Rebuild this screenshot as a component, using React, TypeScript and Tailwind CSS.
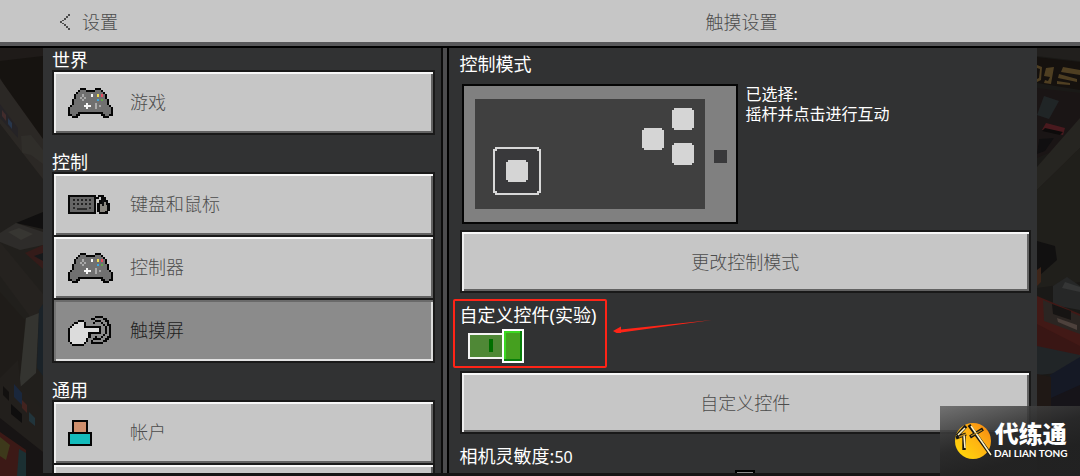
import React, { useState } from "react";

const PALETTE: Record<string, string> = {
  "#": "#050505",
  g: "#707070",
  l: "#a9a9a9",
  w: "#f7f7f7",
  y: "#f0dc50",
  r: "#e84a5f",
  b: "#3aa5dd",
  G: "#63a548",
  h: "#dcdcdc",
};

const CONTROLLER = [
  "......###....###......",
  ".....#ggg####ggg#.....",
  "....#gggggggggggg#....",
  "...#ggglgggwggygrg#...",
  "...#gglglggggggggg#...",
  "..#gggglggggggbgGgg#..",
  "..#gggggggggggggggg#..",
  "..#ggggggwggglggggg#..",
  ".#ggggggwwwgglglgggg#.",
  "#ggggggggwggglggggggg#",
  "#gggggggggggggggggggg#",
  "#gggg############gggg#",
  "##gg##..........##gg##",
  "..###............###..",
];

const HAND = [
  ".............####....",
  "...........##....##..",
  ".....###.....###..##.",
  "...##hhh#...#...#..#.",
  "..#hhhhh#........#.##",
  ".#hhhhhh########..#.#",
  "#hhhhhhhhhhhhhh#..#.#",
  "#hhhhhhhhhhhhhh#..#.#",
  "#hhhhhhhhh######..#.#",
  "#hhhhhhhhh#......#..#",
  "#hhhhhhhhh#..#..#..##",
  "#hhhhhhhh#..####..##.",
  "#hhhhhhhh#.#.....##..",
  ".#hhhhhh#..######....",
  "..######.............",
];

function PixelArt({ rows, cols, className }: { rows: string[]; cols: number; className: string }) {
  return (
    <svg
      viewBox={`0 0 ${cols} ${rows.length}`}
      preserveAspectRatio="none"
      shapeRendering="crispEdges"
      className={className}
      aria-hidden="true"
    >
      {rows.flatMap((row, y) =>
        row
          .slice(0, cols)
          .split("")
          .map((c, x) =>
            c === "." ? null : <rect key={`${x}-${y}`} x={x} y={y} width="1" height="1" fill={PALETTE[c]} />
          )
      )}
    </svg>
  );
}

const ControllerIcon = () => <PixelArt rows={CONTROLLER} cols={22} className="h-[30px] w-[45px]" />;
const HandIcon = () => <PixelArt rows={HAND} cols={21} className="h-[30px] w-[43px]" />;

function KeyboardIcon() {
  const keys: React.ReactNode[] = [];
  for (let y = 0; y < 2; y++)
    for (let x = 0; x < 5; x++)
      keys.push(<rect key={`${x}-${y}`} x={5 + x * 4} y={4 + y * 4} width="2" height="2" fill="#222" />);
  return (
    <svg viewBox="0 0 42 20" shapeRendering="crispEdges" className="h-5 w-[42px]" aria-hidden="true">
      <path d="M0 0h28v19H0z" fill="#080808" />
      <path d="M2 2h24v15H2z" fill="#666" />
      {keys}
      <path d="M5 12h2v2H5zM9 13h10v2H9zM21 12h2v2h-2z" fill="#2c2c2c" />
      <path d="M28 2h2V0h6v2h2v3h2v3h2v8h-2v3h-9v-2h-2V8h2V5h2V2h-2v2h-4z" fill="#080808" />
      <path d="M32 9h2v2h2V7h2v3h1v6h-2v1h-5z" fill="#8b8880" />
      <path d="M34 5h2v6h-2z" fill="#111" />
    </svg>
  );
}

function AccountIcon() {
  return (
    <svg viewBox="0 0 24 26" shapeRendering="crispEdges" className="h-[26px] w-6" aria-hidden="true">
      <path d="M4 0h16v14H4z" fill="#050505" />
      <path d="M6 2h12v11H6z" fill="#cf8f6d" />
      <path d="M0 12h24v14H0z" fill="#050505" />
      <path d="M2 14h20v10H2z" fill="#14bcbc" />
    </svg>
  );
}

const raised =
  "border-2 border-[#191919] bg-[#c6c6c6] text-[#4c4c4c] shadow-[inset_0_2px_#f8f8f8,inset_2px_0_#ededed,inset_-2px_-2px_#626262]";
const pressed =
  "border-2 border-[#191919] bg-[#8b8b8b] text-[#202020] shadow-[inset_0_2px_#6a6a6a,inset_2px_0_#747474,inset_0_-2px_#e2e2e2,inset_-2px_0_#dcdcdc]";

function NavItem({
  label,
  icon,
  active = false,
  onSelect,
}: {
  label: string;
  icon: React.ReactNode;
  active?: boolean;
  onSelect: () => void;
}) {
  return (
    <button
      type="button"
      onClick={onSelect}
      aria-pressed={active}
      className={`-mt-0.5 flex h-[65px] w-full shrink-0 items-center px-3.5 text-left text-[18px] leading-5 first:mt-0 ${
        active ? pressed : raised
      }`}
    >
      <span className="flex w-[62px] shrink-0 items-center">{icon}</span>
      <span className="pb-0.5">{label}</span>
    </button>
  );
}

function NavGroup({ title, children }: { title: string; children: React.ReactNode }) {
  return (
    <section>
      <h2 className="h-[22px] text-[18px] leading-6 font-normal text-white">{title}</h2>
      <div className="flex flex-col">{children}</div>
    </section>
  );
}

function ModePreview() {
  return (
    <svg
      viewBox="0 0 276 140"
      shapeRendering="crispEdges"
      className="h-[140px] w-[276px] shrink-0"
      role="img"
      aria-label="摇杆并点击进行互动"
    >
      <path d="M0 0h276v140H0z" fill="#050505" />
      <path d="M2 2h272v136H2z" fill="#808080" />
      <path d="M13 15h230v110H13z" fill="#404040" />
      <path d="M33 63h44v2h2v44h-2v2H33v-2h-2V65h2z" fill="#d8d8d8" />
      <path d="M35 65h40v2h2v40h-2v2H35v-2h-2V67h2z" fill="#39393b" />
      <g fill="#d5d5d5">
        <path d="M46 76h18v2h2v18h-2v2H46v-2h-2V78h2z" />
        <path d="M212 24h18v2h2v18h-2v2h-18v-2h-2V26h2z" />
        <path d="M182 44h18v2h2v18h-2v2h-18v-2h-2V46h2z" />
        <path d="M212 59h18v2h2v18h-2v2h-18v-2h-2V61h2z" />
      </g>
      <path d="M252 66h13v13h-13z" fill="#39393b" />
    </svg>
  );
}

function SceneLeft() {
  return (
    <svg viewBox="0 0 43 428" preserveAspectRatio="none" className="h-full w-[43px] shrink-0 opacity-85" aria-hidden="true">
      <path d="M0 0h43v428H0z" fill="#24221e" />
      <path d="M0 0h43v102L0 30z" fill="#171310" />
      <path d="M0 0h43v8L0 13z" fill="#211d1a" />
      <path d="M0 31l43 60v42L0 76z" fill="#302c28" />
      <path d="M0 56l18 24v10L0 70z" fill="#28262a" />
      <path d="M2 62l4 5v6l-4-5z" fill="#4a3131" />
      <path d="M8 70l4 5v6l-4-5z" fill="#2b3c55" />
      <path d="M21 88l10-1 12 15v14l-12-9-9-2z" fill="#35332f" />
      <path d="M0 76l43 55v35L0 185z" fill="#24221f" />
      <path d="M43 164v17l-27-6z" fill="#100f0f" />
      <path d="M0 185l16-10 27 9v13l-23 5-20-8z" fill="#33312e" />
      <path d="M8 184l11-4 14 6-12 6z" fill="#3e3c38" />
      <path d="M0 194l43 52v40L0 228z" fill="#282521" />
      <path d="M43 197v24l-18-16z" fill="#3a1d1a" />
      <path d="M43 205v8l-9-5z" fill="#17191c" />
      <path d="M0 244l25 28-5 60-20 14z" fill="#211e1a" />
      <path d="M26 270l13-5-3 60-17 15z" fill="#3a3a36" />
      <path d="M39 262l4-6v72l-6-8z" fill="#1b252c" />
      <path d="M0 330l18-18 3 28 22 22v66H0z" fill="#25211e" />
      <path d="M14 336l8 9v12l-8-8z" fill="#1c2b43" />
      <path d="M3 338l6 6v9l-6-6z" fill="#12100f" />
      <path d="M11 356l11 10v9l-11-9z" fill="#0e0d0d" />
      <path d="M22 352l5 5v8l-5-5z" fill="#4b2621" />
      <path d="M29 364l6 6v8l-6-5z" fill="#243a42" />
      <path d="M0 370l43 34v24H0z" fill="#181414" />
      <path d="M0 384l26 18v26H0z" fill="#431b17" />
      <path d="M0 389l10 8-4 15-6-4z" fill="#45401d" />
      <path d="M19 401l7 4v23h-9z" fill="#1d3438" />
    </svg>
  );
}

function SceneRight() {
  return (
    <svg viewBox="0 0 43 428" preserveAspectRatio="none" className="h-full w-[43px] shrink-0 opacity-85" aria-hidden="true">
      <path d="M0 0h43v428H0z" fill="#1c1b18" />
      <path d="M0 0h43v13L0 8z" fill="#24221f" />
      <path d="M0 9l43 5v28L0 35z" fill="#15110e" />
      <path d="M0 17l5 2-1 13-4 2v-3l2-1 1-9-3-1zM9 20l8-1-3 17-7-1 1-3 3 1 2-4-6-1zM26 19l17 3v5l-19-3zM22 26l18 5v3l-19-4zM20 33l13 2v2l-13-1z" fill="#5a4725" />
      <path d="M0 40l43 5v34L14 104 0 110z" fill="#1c1616" />
      <path d="M7 48l15 5-10 18-12-4z" fill="#23282a" />
      <path d="M9 75l19 5-2 7-21-5z" fill="#531b20" />
      <path d="M8 80l18 4-3 3-18-4z" fill="#0c0a0a" />
      <path d="M2 91l15-1-9 13-8 3z" fill="#100f10" />
      <path d="M0 119l43-49v30L0 142z" fill="#2a2824" />
      <path d="M0 142l43-42v134L0 240z" fill="#23211d" />
      <path d="M0 193l18 5 2 14-18 16-2-4z" fill="#111010" />
      <path d="M0 222l4-3v15l-4 4z" fill="#45281a" />
      <path d="M16 238l14-9 13 9v24l-27-5z" fill="#292b2b" />
      <path d="M28 234l15 5v5l-18-4z" fill="#3b3c3c" />
      <path d="M0 248l43 18v42L0 291z" fill="#4b1a17" />
      <path d="M6 252l37 16v18L7 273z" fill="#302925" />
      <path d="M15 256l19 7v9l-18-6z" fill="#171413" />
      <path d="M20 270l20 7v5l-19-8z" fill="#574943" />
      <path d="M0 276l43 22v8L14 322 0 310z" fill="#401714" />
      <path d="M0 298l43 9v16L0 327z" fill="#24282b" />
      <path d="M13 327l30-18v43H13z" fill="#151a29" />
      <path d="M0 326l14 3v99H0z" fill="#211916" />
      <path d="M14 350l29-13v91H14z" fill="#17141a" />
    </svg>
  );
}

function Watermark() {
  return (
    <div className="absolute right-0 bottom-0 flex h-[70px] w-[140px] items-center bg-[linear-gradient(165deg,rgba(90,90,90,0.78)_0%,rgba(42,42,42,0.92)_45%,rgba(34,34,34,0.97)_70%)] pl-3.5">
      <svg viewBox="0 0 40 40" className="h-10 w-10 shrink-0" aria-hidden="true">
        <defs>
          <linearGradient id="badge" x1="0" y1="1" x2="1" y2="0">
            <stop offset="0" stopColor="#ffdf0a" />
            <stop offset="0.55" stopColor="#ffb312" />
            <stop offset="1" stopColor="#f58212" />
          </linearGradient>
        </defs>
        <circle cx="19" cy="20" r="18" fill="url(#badge)" />
        <path d="M12 5L3 15M2 17l10-4M10 14v15M16 16L29 8M15 4l22 30" stroke="#141414" strokeWidth="3.4" fill="none" />
        <path d="M11 7L4 14M10 14l1 13M17 5l20 29" stroke="#fff3c4" strokeWidth="1.6" fill="none" />
        <path d="M5 16l7-3M17 15l11-6" stroke="#b48620" strokeWidth="1.4" fill="none" />
      </svg>
      <div className="flex flex-col items-center whitespace-nowrap text-white">
        <span className="text-[24px] leading-6 font-black">代练通</span>
        <span className="font-['Lato'] text-[10px] leading-[14px] font-bold">DAI LIAN TONG</span>
      </div>
    </div>
  );
}

export default function App() {
  const [page, setPage] = useState("touch");
  const [custom, setCustom] = useState(true);
  const [sensitivity, setSensitivity] = useState(50);

  return (
    <div className="relative flex h-screen flex-col overflow-hidden bg-[#151414] font-['Noto_Sans','Noto_Sans_CJK_SC',sans-serif] font-light">
      <header className="flex h-12 shrink-0 items-center border-b-2 border-black bg-[#c6c6c6] pb-0.5 text-[18px] text-[#4c4c4c] shadow-[inset_0_-4px_#58585a]">
        <div className="w-[41%] pl-[60px]">
          <button type="button" className="flex items-center gap-3 leading-5">
            <svg viewBox="0 0 10 16" shapeRendering="crispEdges" className="h-4 w-2.5" aria-hidden="true">
              <path
                d="M8 0h2v2H8zM6 2h2v2H6zM4 4h2v2H4zM2 6h2v1H2zM0 7h2v2H0zM2 9h2v1H2zM4 10h2v2H4zM6 12h2v2H6zM8 14h2v2H8z"
                fill="#4c4c4c"
              />
            </svg>
            设置
          </button>
        </div>
        <h1 className="flex-1 pr-10 text-center leading-5">触摸设置</h1>
      </header>

      <div className="flex min-h-0 flex-1">
        <SceneLeft />
        <div className="mb-[3px] flex min-w-0 flex-1 bg-[#313233]">
          <nav className="flex w-[40.2%] shrink-0 flex-col gap-[15px] overflow-hidden border-r-2 border-[#0c0c0c] pr-1.5 pl-[9px]">
            <NavGroup title="世界">
              <NavItem label="游戏" icon={<ControllerIcon />} active={page === "game"} onSelect={() => setPage("game")} />
            </NavGroup>
            <NavGroup title="控制">
              <NavItem label="键盘和鼠标" icon={<KeyboardIcon />} active={page === "keyboard"} onSelect={() => setPage("keyboard")} />
              <NavItem label="控制器" icon={<ControllerIcon />} active={page === "controller"} onSelect={() => setPage("controller")} />
              <NavItem label="触摸屏" icon={<HandIcon />} active={page === "touch"} onSelect={() => setPage("touch")} />
            </NavGroup>
            <NavGroup title="通用">
              <NavItem label="帐户" icon={<AccountIcon />} active={page === "account"} onSelect={() => setPage("account")} />
              <NavItem label="" icon={null} active={page === "more"} onSelect={() => setPage("more")} />
            </NavGroup>
          </nav>

          <main className="min-w-0 flex-1 overflow-hidden border-l-4 border-[#4c4c4e]">
            <div className="h-full border-l-2 border-black pr-1.5 pl-[11px] text-[18px] leading-5 font-normal text-white">
              <h2 className="h-9 pt-1.5">控制模式</h2>
              <div className="flex gap-2 pl-0.5">
                <ModePreview />
                <p className="text-[16px] leading-5">
                  已选择:
                  <br />
                  摇杆并点击进行互动
                </p>
              </div>
              <button type="button" className={`mt-1.5 block h-[63px] w-full font-light ${raised}`}>
                更改控制模式
              </button>

              <div className="relative flex h-[78px] flex-col items-start pt-3">
                <label htmlFor="custom-controls">自定义控件(实验)</label>
                <span className="relative mt-1 ml-2 block h-[34px] w-14">
                  <input
                    id="custom-controls"
                    type="checkbox"
                    role="switch"
                    checked={custom}
                    onChange={(e) => setCustom(e.target.checked)}
                    className="absolute inset-0 h-full w-full cursor-pointer appearance-none"
                  />
                  <svg viewBox="0 0 56 34" shapeRendering="crispEdges" className="pointer-events-none h-full w-full" aria-hidden="true">
                    <path d="M0 4h36v26H0z" fill="#f4f4f4" />
                    <path d="M2 6h34v22H2z" fill={custom ? "#4f8836" : "#8c8c8c"} />
                    {custom && <path d="M21 10h4v13h-4z" fill="#006f00" />}
                    <path d="M34 0h22v34H34z" fill="#fff" />
                    <path d="M36 2h18v30H36z" fill="#087e0a" />
                    <path d="M36 2h16v28H36z" fill="#3bd821" />
                    <path d="M38 4h14v26H38z" fill="#45a01f" />
                  </svg>
                </span>
                <span className="pointer-events-none absolute top-1.5 -left-[7px] h-[69px] w-[154px] rounded-xs border-2 border-[#ff2417]" />
                <svg viewBox="0 0 100 16" className="pointer-events-none absolute top-6 left-[153px] h-4 w-[100px]" aria-hidden="true">
                  <path d="M0 14L8 9.500v3L99 3 8 15.500v3z" fill="#ff2417" />
                </svg>
              </div>

              <button type="button" className={`block h-[63px] w-full font-light ${raised}`}>
                自定义控件
              </button>
              <label htmlFor="sensitivity" className="mt-3 block">
                相机灵敏度:<span className="text-[16px]">{sensitivity}</span>
              </label>
              <input
                id="sensitivity"
                type="range"
                min={0}
                max={100}
                value={sensitivity}
                onChange={(e) => setSensitivity(Number(e.target.value))}
                className="mt-[3px] block h-8 w-full appearance-none bg-transparent [&::-webkit-slider-thumb]:h-8 [&::-webkit-slider-thumb]:w-5 [&::-webkit-slider-thumb]:appearance-none [&::-webkit-slider-thumb]:border-2 [&::-webkit-slider-thumb]:border-black [&::-webkit-slider-thumb]:bg-[#8b8b8b]"
              />
            </div>
          </main>
        </div>
        <SceneRight />
      </div>
      <Watermark />
    </div>
  );
}
